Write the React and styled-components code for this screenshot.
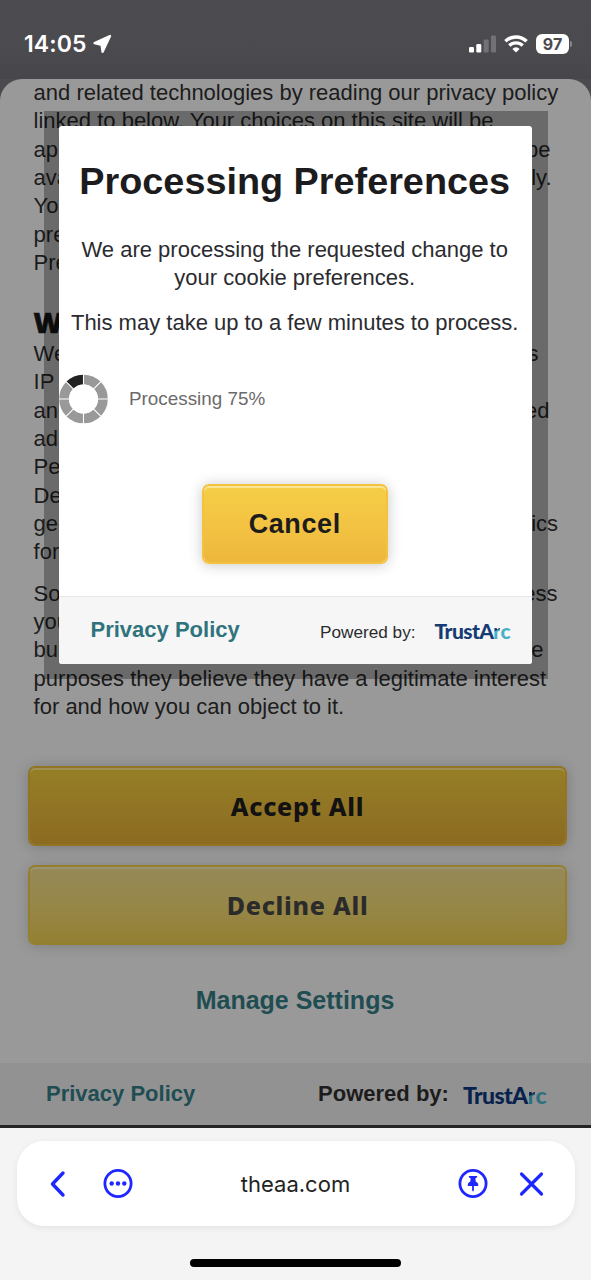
import React from "react";
import styled, { createGlobalStyle } from "styled-components";

const GlobalStyle = createGlobalStyle`
  * {
    box-sizing: border-box;
  }

  body {
    margin: 0;
    font-family: "Liberation Sans", Arial, sans-serif;
  }

  h1, h2, p {
    margin: 0;
  }

  svg {
    display: block;
    flex: none;
  }

  button {
    font: inherit;
    background: none;
    border: none;
    padding: 0;
  }
`;

const Screen = styled.div`
  position: relative;
  width: 591px;
  height: 1280px;
  overflow: hidden;
  display: flex;
  flex-direction: column;
  background-color: #4b4a4f;
`;

const StatusBar = styled.header`
  height: 79px;
  flex: none;
  padding: 8px 19px 0 24px;
  display: flex;
  align-items: center;
  justify-content: space-between;
  color: #fff;
  background: linear-gradient(#4c4c50, #4b4a4f 60%, #47464b);
`;

const StatusGroup = styled.div`
  display: flex;
  align-items: center;
  gap: ${({ $gap }) => $gap}px;
`;

const Clock = styled.span`
  font-family: Inter, sans-serif;
  font-weight: 600;
  font-size: 23px;
  line-height: 28px;
  letter-spacing: 0.1px;
`;

const Battery = styled.div`
  display: flex;
  align-items: center;
  gap: 1px;

  span {
    width: 33px;
    height: 20px;
    border-radius: 6px;
    background-color: #fff;
    color: #4b4a4f;
    font-family: Inter, sans-serif;
    font-weight: 700;
    font-size: 16px;
    line-height: 20px;
    text-align: center;
  }

  i {
    width: 2px;
    height: 6px;
    border-radius: 0 2px 2px 0;
    background-color: #88878b;
  }
`;

const Sheet = styled.main`
  height: 1046px;
  flex: none;
  overflow: hidden;
  display: flex;
  flex-direction: column;
  border-radius: 22px 22px 0 0;
  background-color: #999;
  color: #1c1c1c;
`;

const Copy = styled.section`
  height: 687px;
  flex: none;
  padding-left: 33.6px;
  font-size: 22px;
  line-height: 28.34px;
`;

const Paragraph = styled.div`
  margin-top: ${({ $top }) => $top}px;
`;

const Line = styled.p`
  width: ${({ $width }) => ($width ? `${$width}px` : "auto")};
  display: flex;
  justify-content: space-between;
  white-space: nowrap;
`;

const Heading = styled.h2`
  margin-top: 26.6px;
  font-family: "Noto Sans", sans-serif;
  font-weight: 900;
  font-size: 28px;
  line-height: 36px;
  color: #101010;
  -webkit-text-stroke: 0.6px #101010;
`;

const Actions = styled.section`
  height: 297px;
  flex: none;
  padding: 0 24px 0 28px;
  display: flex;
  flex-direction: column;
  align-items: stretch;
`;

const themes = {
  bright: {
    fill: "linear-gradient(#f6ce46, #f2c142 60%, #edb63c)",
    line: "#f3c340",
    shine: "#fae596",
    text: "#1c1c1c",
    shadow: "rgba(0, 0, 0, 0.22)",
  },
  dim: {
    fill: "linear-gradient(#967e26, #907324 60%, #8c6b20)",
    line: "#917424",
    shine: "#9e9055",
    text: "#121212",
    shadow: "rgba(0, 0, 0, 0.2)",
  },
  pale: {
    fill: "linear-gradient(#968958, #968645 60%, #948033)",
    line: "#957f2d",
    shine: "#9b9376",
    text: "#2b2b2b",
    shadow: "rgba(0, 0, 0, 0.16)",
  },
};

const Button = styled.button`
  height: 80px;
  border: 2px solid ${({ $look }) => themes[$look].line};
  border-radius: 7px;
  background: ${({ $look }) => themes[$look].fill} padding-box;
  box-shadow: inset 0 2px 0 ${({ $look }) => themes[$look].shine},
    0 1px 14px ${({ $look }) => themes[$look].shadow};
  color: ${({ $look }) => themes[$look].text};
  font-family: "Noto Sans", sans-serif;
  font-weight: 800;
  font-size: 25px;
  letter-spacing: 0.75px;

  & + & {
    margin-top: 19px;
  }
`;

const CancelButton = styled(Button)`
  width: 186px;
  margin: 61px auto 0;
  font-family: "Liberation Sans", Arial, sans-serif;
  font-weight: 700;
  font-size: 27px;
  letter-spacing: 0.6px;
`;

const Link = styled.a`
  color: ${({ $dim }) => ($dim ? "#1f4d52" : "#2f747d")};
  font-weight: 700;
  font-size: ${({ $size }) => $size || 22}px;
  line-height: 28px;
`;

const ManageRow = styled.div`
  margin-top: 41px;
  padding-right: 5px;
  text-align: center;
`;

const SheetFooter = styled.footer`
  height: 62px;
  flex: none;
  padding: 0 45px 0 46px;
  display: flex;
  align-items: center;
  background-color: #929292;
`;

const Powered = styled.span`
  margin-left: auto;
  margin-right: ${({ $gap }) => $gap}px;
  padding-top: ${({ $drop }) => $drop || 0}px;
  font-size: ${({ $size }) => $size}px;
  font-weight: ${({ $bold }) => ($bold ? 700 : 400)};
  line-height: 28px;
`;

const Logo = styled.span`
  padding-top: 2px;
  font-family: Lato, sans-serif;
  font-weight: 900;
  font-size: ${({ $size }) => $size}px;
  line-height: 28px;
  letter-spacing: -0.6px;
  color: ${({ $dim }) => ($dim ? "#08224d" : "#163c73")};

  b {
    font-weight: 900;
    background: linear-gradient(
      155deg,
      ${({ $dim }) => ($dim ? "#08224d" : "#163c73")} 48%,
      ${({ $dim }) => ($dim ? "#2b7180" : "#47b1c6")} 52%
    );
    background-clip: text;
    color: transparent;
  }

  em {
    font-style: normal;
    color: ${({ $dim }) => ($dim ? "#2b7180" : "#47b1c6")};
  }
`;

const Backdrop = styled.div`
  position: absolute;
  left: 44px;
  top: 111px;
  width: 504px;
  height: 568px;
  padding: 15px 16px 15px 15px;
  background-color: rgba(0, 0, 0, 0.3);
`;

const Dialog = styled.section`
  height: 538px;
  overflow: hidden;
  display: flex;
  flex-direction: column;
  border-radius: 3px;
  background-color: #fff;
  color: #2b2b30;
  text-align: center;
`;

const DialogBody = styled.div`
  padding-right: 1.6px;
  display: flex;
  flex-direction: column;
`;

const Title = styled.h1`
  margin-top: 33px;
  font-size: 37.8px;
  line-height: 44px;
  color: #1c1c1e;
  white-space: nowrap;
`;

const Message = styled.p`
  margin-top: ${({ $top }) => $top}px;
  font-size: 22px;
  line-height: 28.34px;
  white-space: nowrap;
`;

const Progress = styled.div`
  height: 49px;
  flex: none;
  margin-top: 37.1px;
  display: flex;
  align-items: center;
  gap: 20px;
  font-size: 18.85px;
  color: #6b6b6b;
`;

const DialogFooter = styled.footer`
  flex: 1;
  margin-top: 32px;
  padding: 0 22px 1px 31.5px;
  display: flex;
  align-items: center;
  border-top: 1px solid #e6e6e6;
  background-color: #f6f6f6;
`;

const BrowserArea = styled.div`
  flex: 1;
  padding: 13px 16px 0 17px;
  display: flex;
  flex-direction: column;
  align-items: center;
  border-top: 3px solid #252527;
  background-color: #f4f4f4;
`;

const AddressBar = styled.nav`
  align-self: stretch;
  height: 85px;
  padding: 0 29px 0 32px;
  display: grid;
  grid-template-columns: 84px 1fr 88px;
  align-items: center;
  border-radius: 27px;
  background-color: #fff;
  box-shadow: 0 2px 6px rgba(0, 0, 0, 0.07);
`;

const Tools = styled.div`
  display: flex;
  justify-content: space-between;
`;

const Url = styled.span`
  font-family: Inter, sans-serif;
  font-size: 22px;
  color: #222;
  text-align: center;
`;

const HomeIndicator = styled.div`
  width: 211px;
  height: 8px;
  margin-top: 33px;
  margin-right: 1px;
  border-radius: 4px;
  background-color: #000;
`;

// each line is [start, end, width]: the middle of most lines sits under the dialog
const intro = [
  ["and related technologies by reading our privacy policy"],
  ["linked to below. Your choices on this site will be"],
  ["app", "be", 517],
  ["ava", "ly.", 518],
  ["You"],
  ["pre"],
  ["Pre"],
];

const partners = [
  ["We", "s", 505],
  ["IP"],
  ["and", "ed", 516],
  ["ads"],
  ["Per"],
  ["Dev"],
  ["geo", "ics", 524.5],
  ["for"],
];

const interest = [
  ["Som", "ess", 524],
  ["you"],
  ["bus", "e", 510],
  ["purposes they believe they have a legitimate interest"],
  ["for and how you can object to it."],
];

const Lines = ({ items, top }) => (
  <Paragraph $top={top}>
    {items.map(([start, end, width]) => (
      <Line key={start} $width={width}>
        <span>{start}</span>
        {end && <span>{end}</span>}
      </Line>
    ))}
  </Paragraph>
);

const TrustArc = ({ size, dim }) => (
  <Logo $size={size} $dim={dim}>
    TrustA<b>r</b>
    <em>c</em>
  </Logo>
);

const Spinner = () => (
  <svg width="50" height="50" viewBox="-24.5 -25 50 50">
    <circle r="19.4" fill="none" stroke="#999" strokeWidth="9.8" />
    <path
      d="M-13.7 -13.7A19.4 19.4 0 0 1 0 -19.4"
      fill="none"
      stroke="#222"
      strokeWidth="9.8"
    />
    <path
      d="M0 -25V25M-25 0H25M-17.7 -17.7L17.7 17.7M17.7 -17.7L-17.7 17.7"
      stroke="#fff"
      strokeWidth="1.1"
    />
    <circle r="14.5" fill="#fff" />
  </svg>
);

const LocationIcon = () => (
  <svg width="19" height="20" viewBox="0 0 19 20">
    <path
      d="M17 2L1.6 9.2L8.6 10.8L9.6 17.8Z"
      fill="#fff"
      stroke="#fff"
      strokeWidth="2.4"
      strokeLinejoin="round"
    />
  </svg>
);

const SignalIcon = () => (
  <svg width="27" height="18" viewBox="0 0 27 18" fill="#fff">
    <rect x="0" y="12" width="5" height="5.6" rx="1.3" />
    <rect x="7.3" y="9" width="5" height="8.6" rx="1.3" />
    <rect x="14.7" y="4.6" width="5" height="13" rx="1.3" opacity=".22" />
    <rect x="22" y="0.4" width="5" height="17.2" rx="1.3" opacity=".22" />
  </svg>
);

const WifiIcon = () => (
  <svg width="24" height="18" viewBox="0 0 24 18" fill="none" stroke="#fff">
    <path d="M1.4 6.2A15.2 15.2 0 0 1 22.6 6.2" strokeWidth="3.5" />
    <path d="M5.3 10.5A9.6 9.6 0 0 1 18.7 10.5" strokeWidth="3.3" />
    <path
      d="M12 17.6L8.4 13.9A5 5 0 0 1 15.6 13.9Z"
      fill="#fff"
      stroke="none"
    />
  </svg>
);

const ToolIcon = ({ children }) => (
  <svg
    width="30"
    height="30"
    viewBox="0 0 30 30"
    fill="none"
    stroke="#1f27ff"
    strokeWidth="2.8"
    strokeLinecap="round"
    strokeLinejoin="round"
  >
    {children}
  </svg>
);

const App = () => {
  return (
    <>
      <GlobalStyle />
      <Screen>
        <StatusBar>
          <StatusGroup $gap={6}>
            <Clock>14:05</Clock>
            <LocationIcon />
          </StatusGroup>
          <StatusGroup $gap={8}>
            <SignalIcon />
            <WifiIcon />
            <Battery>
              <span>97</span>
              <i />
            </Battery>
          </StatusGroup>
        </StatusBar>

        <Sheet>
          <Copy>
            <Lines items={intro} top={-0.2} />
            <Heading>W</Heading>
            <Lines items={partners} top={0.2} />
            <Lines items={interest} top={13} />
          </Copy>
          <Actions>
            <Button $look="dim">Accept All</Button>
            <Button $look="pale">Decline All</Button>
            <ManageRow>
              <Link $dim $size={25}>
                Manage Settings
              </Link>
            </ManageRow>
          </Actions>
          <SheetFooter>
            <Link $dim>Privacy Policy</Link>
            <Powered $size={22} $gap={14} $bold>
              Powered by:
            </Powered>
            <TrustArc size={23} dim />
          </SheetFooter>
        </Sheet>

        <BrowserArea>
          <AddressBar>
            <Tools>
              <button aria-label="Back">
                <ToolIcon>
                  <path d="M14 4L3.5 15L14 26" strokeWidth="3.4" />
                </ToolIcon>
              </button>
              <button aria-label="More">
                <ToolIcon>
                  <circle cx="15" cy="14.5" r="13.1" />
                  <g fill="#1f27ff" stroke="none">
                    <circle cx="8.7" cy="14.5" r="2.2" />
                    <circle cx="15" cy="14.5" r="2.2" />
                    <circle cx="21.3" cy="14.5" r="2.2" />
                  </g>
                </ToolIcon>
              </button>
            </Tools>
            <Url>theaa.com</Url>
            <Tools>
              <button aria-label="Pin">
                <ToolIcon>
                  <circle cx="15" cy="14.5" r="13.1" />
                  <path
                    d="M11.4 7H18.6Q19.3 7 19.3 7.8Q19.3 8.5 17.4 9.2L17.7 12.6Q20.4 13.9 20.4 16.3Q20.4 17.1 19.6 17.1H15.9V21.3L15 22.8L14.1 21.3V17.1H10.4Q9.6 17.1 9.6 16.3Q9.6 13.9 12.3 12.6L12.6 9.2Q10.7 8.5 10.7 7.8Q10.7 7 11.4 7Z"
                    fill="#1f27ff"
                    stroke="none"
                  />
                </ToolIcon>
              </button>
              <button aria-label="Close">
                <ToolIcon>
                  <path d="M5.5 5L25.5 25M25.5 5L5.5 25" strokeWidth="3.2" />
                </ToolIcon>
              </button>
            </Tools>
          </AddressBar>
          <HomeIndicator />
        </BrowserArea>

        <Backdrop>
          <Dialog>
            <DialogBody>
              <Title>Processing Preferences</Title>
              <Message $top={33}>
                We are processing the requested change to
                <br />
                your cookie preferences.
              </Message>
              <Message $top={16.2}>
                This may take up to a few minutes to process.
              </Message>
              <Progress>
                <Spinner />
                <span>Processing 75%</span>
              </Progress>
              <CancelButton $look="bright">Cancel</CancelButton>
            </DialogBody>
            <DialogFooter>
              <Link>Privacy Policy</Link>
              <Powered $size={17.2} $gap={19} $drop={3}>
                Powered by:
              </Powered>
              <TrustArc size={21} />
            </DialogFooter>
          </Dialog>
        </Backdrop>
      </Screen>
    </>
  );
};

export default App;
